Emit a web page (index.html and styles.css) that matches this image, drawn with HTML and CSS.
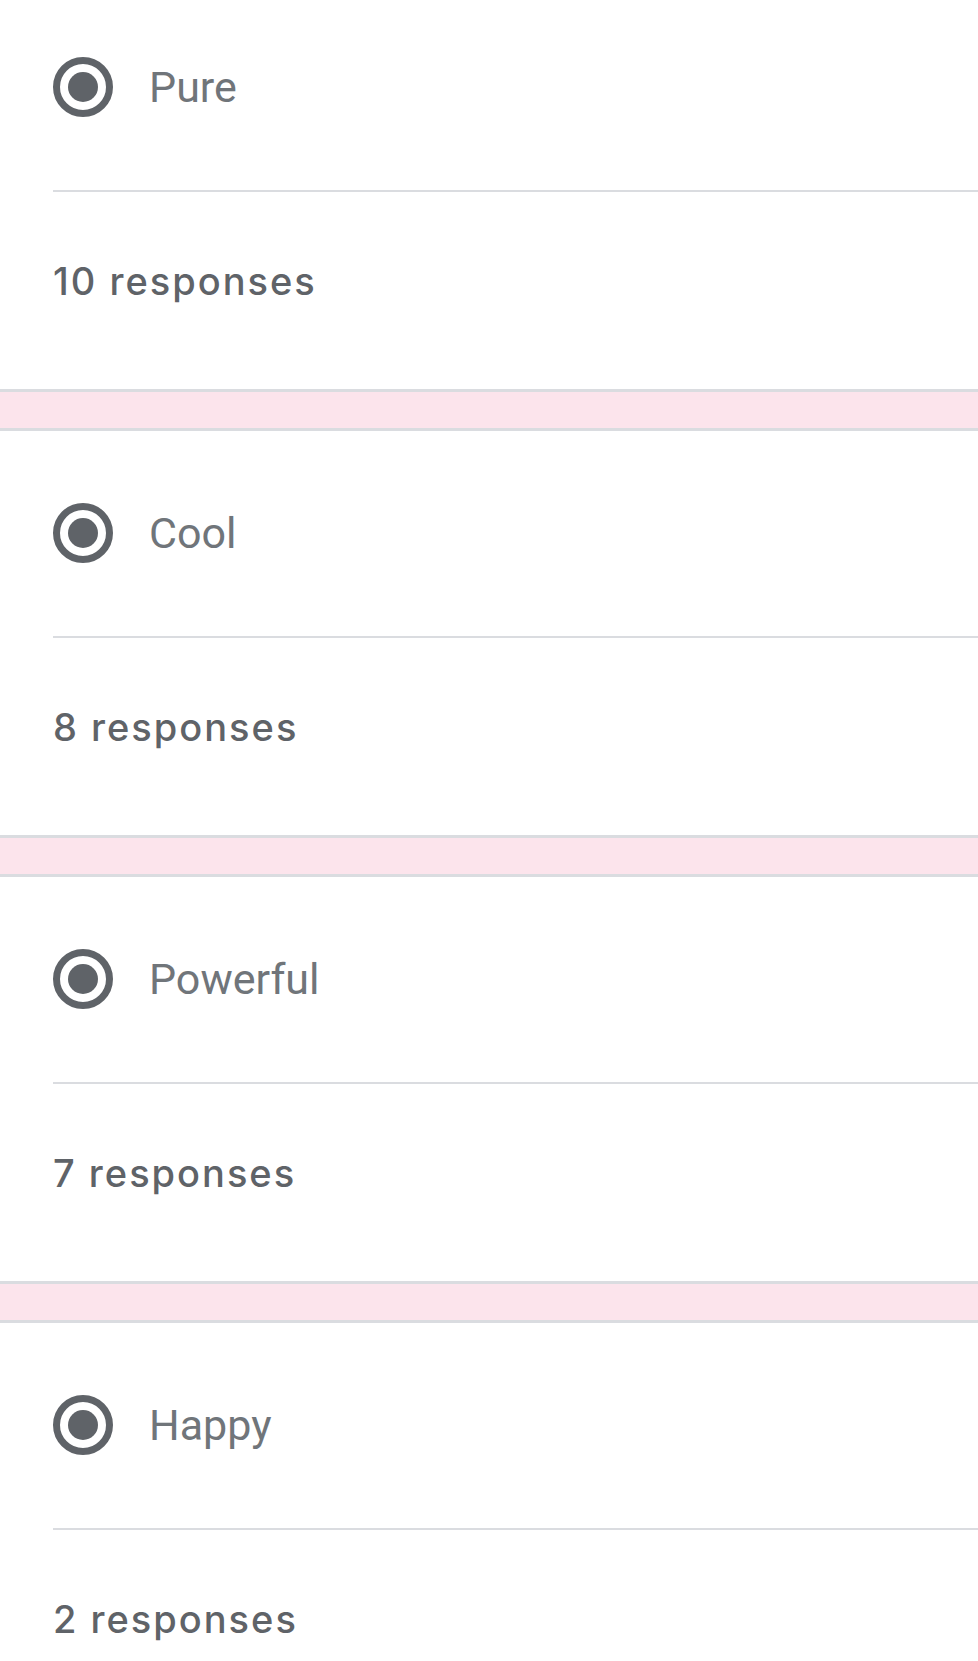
FILE: index.html
```html
<!DOCTYPE html>
<html lang="en">
<head>
    <meta charset="UTF-8">
    <meta name="viewport" content="width=device-width, initial-scale=1.0">
    <title>Responses</title>
    <link rel="stylesheet" href="styles.css">
</head>
<body>
    <div class="list">
        <div class="card card-first">
            <div class="option">
                <span class="radio"><span class="dot"></span></span>
                <span class="label">Pure</span>
            </div>
            <div class="count">10 responses</div>
        </div>
        <div class="gap"></div>
        <div class="card">
            <div class="option">
                <span class="radio"><span class="dot"></span></span>
                <span class="label">Cool</span>
            </div>
            <div class="count">8 responses</div>
        </div>
        <div class="gap"></div>
        <div class="card">
            <div class="option">
                <span class="radio"><span class="dot"></span></span>
                <span class="label">Powerful</span>
            </div>
            <div class="count">7 responses</div>
        </div>
        <div class="gap"></div>
        <div class="card">
            <div class="option">
                <span class="radio"><span class="dot"></span></span>
                <span class="label">Happy</span>
            </div>
            <div class="count">2 responses</div>
        </div>
    </div>
</body>
</html>
```

FILE: styles.css
```css
*{
    margin:0;
    padding:0;
    box-sizing:border-box;
}

body{
    background:#fff;
    overflow:hidden;
}

.card{
    height:404px;
    padding-left:53px;
    padding-top:72px;
    background:#fff;
}
.card-first{
    height:389px;
    padding-top:57px;
}

.option{
    display:flex;
    align-items:center;
    gap:36px;
    height:60px;
    border-bottom:2px solid #dadce0;
    box-sizing:content-box;
    padding-bottom:73px;
}
.radio{
    width:60px;
    height:60px;
    border:7px solid #5f6368;
    border-radius:50%;
    display:flex;
    align-items:center;
    justify-content:center;
    flex:none;
}
.dot{
    width:30px;
    height:30px;
    border-radius:50%;
    background:#5f6368;
}
.label{
    font-family:Roboto, "Liberation Sans", sans-serif;
    font-size:43px;
    color:#70757a;
    line-height:60px;
}

.count{
    font-family:Inter, "Open Sans", sans-serif;
    font-weight:500;
    font-size:38px;
    letter-spacing:2px;
    color:#5f6368;
    line-height:50px;
    margin-top:64px;
}

.gap{
    height:42px;
    background:#fce4ec;
    border-top:3px solid #dadce0;
    border-bottom:3px solid #dadce0;
}
```
